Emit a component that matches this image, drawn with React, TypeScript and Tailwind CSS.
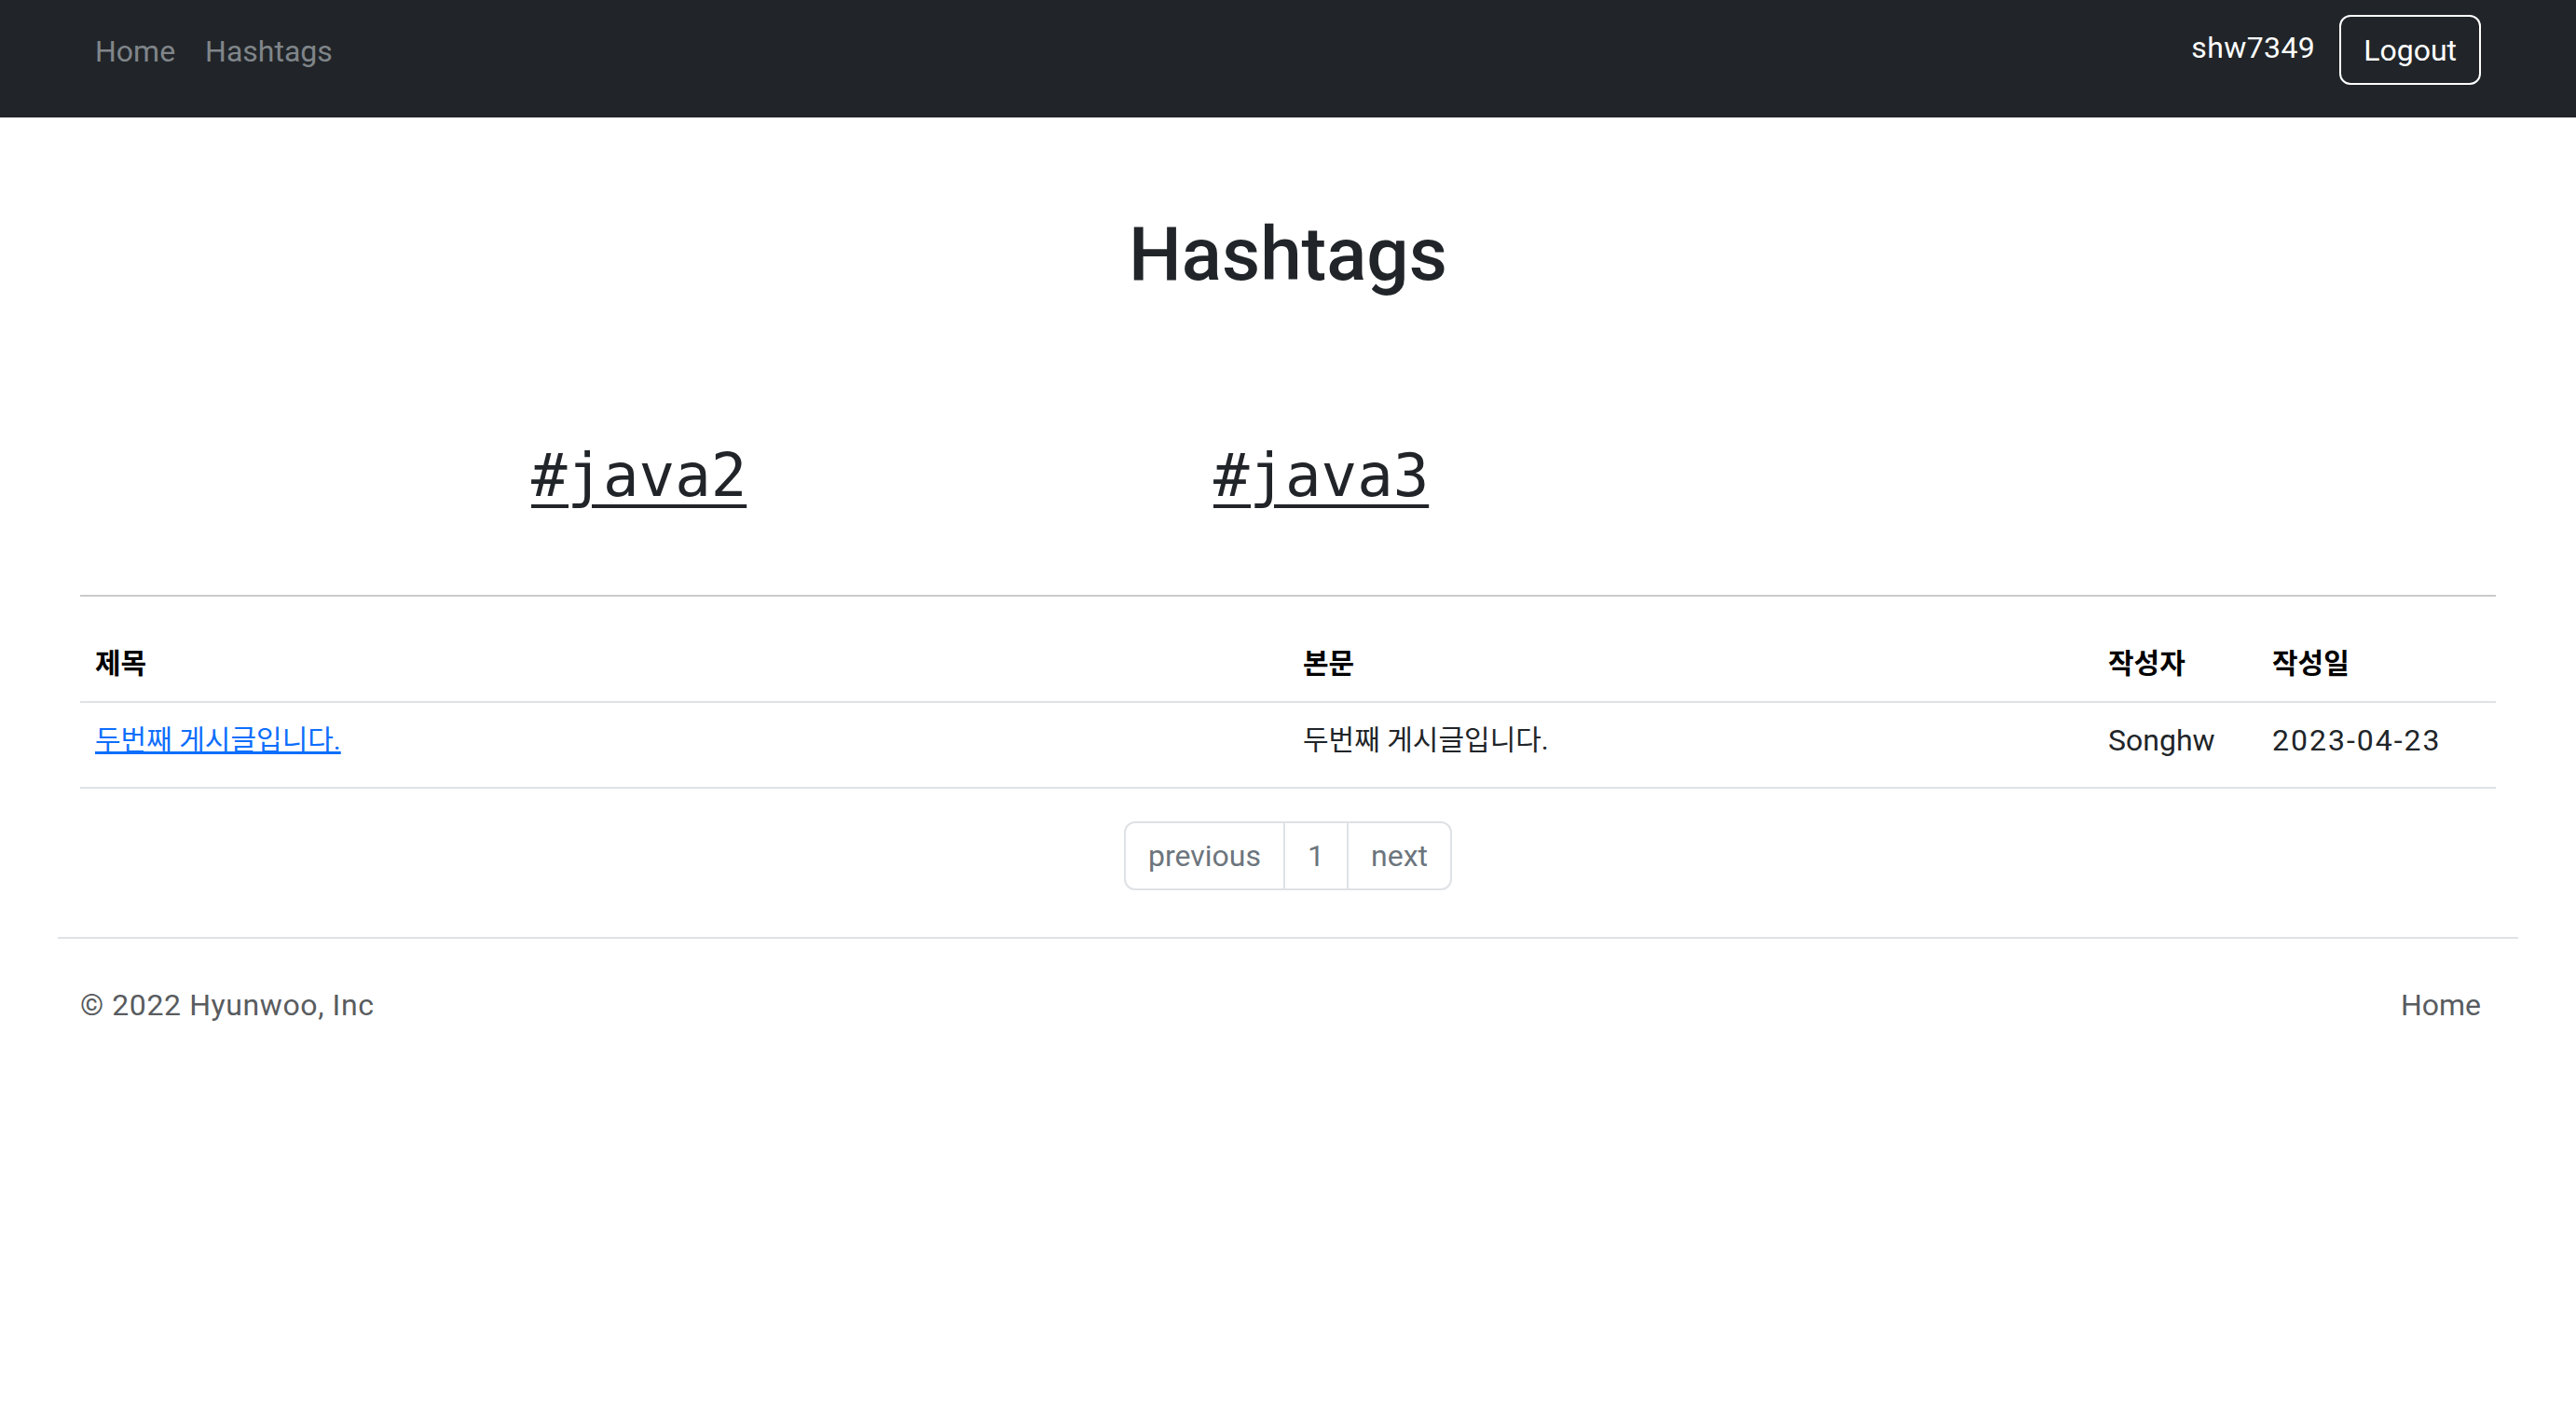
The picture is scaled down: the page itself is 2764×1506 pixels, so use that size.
import { FC } from "react";

const articles = [
  {
    title: "두번째 게시글입니다.",
    content: "두번째 게시글입니다.",
    author: "Songhw",
    createdAt: "2023-04-23",
  },
];

const hashtags = ["#java2", "#java3"];

const Header: FC = () => {
  return (
    <header className="flex h-[126px] items-start justify-between bg-[#212529] pl-[86px] pr-[102px] pt-[16px]">
      <nav className="flex pt-[15px]">
        <a href="#" className="px-[16px] leading-[48px] text-[#80858a]">
          Home
        </a>
        <a href="#" className="px-[16px] leading-[48px] text-[#80858a]">
          Hashtags
        </a>
      </nav>
      <div className="flex h-[75px] items-center gap-[26px]">
        <span className="mb-[6px] tracking-[0.4px] text-white">shw7349</span>
        <button className="h-[75px] rounded-[12px] border-2 border-white px-[24px] leading-[48px] text-white">
          Logout
        </button>
      </div>
    </header>
  );
};

const Pagination: FC = () => {
  return (
    <ul className="mx-auto mt-[35px] flex w-fit text-[#6c757d]">
      <li className="rounded-l-[12px] border-2 border-[#dee2e6] px-[24px] py-[11px] leading-[48px]">
        previous
      </li>
      <li className="-ml-[2px] border-2 border-[#dee2e6] px-[24px] py-[11px] leading-[48px]">
        1
      </li>
      <li className="-ml-[2px] rounded-r-[12px] border-2 border-[#dee2e6] px-[24px] py-[11px] leading-[48px]">
        next
      </li>
    </ul>
  );
};

const App: FC = () => {
  return (
    <div className="min-h-screen bg-white font-['Roboto','Noto_Sans_CJK_KR',sans-serif] text-[32px] leading-[48px] text-[#212529]">
      <Header />

      <main className="px-[86px] pt-[99px]">
        <h1 className="text-center text-[80px] font-medium leading-[96px]">
          Hashtags
        </h1>

        <div className="mt-[151px] flex pl-[484px]">
          {hashtags.map((tag) => (
            <div key={tag} className="w-[732px]">
              <a
                href="#"
                className="font-['DejaVu_Sans_Mono',monospace] text-[64px] leading-[77px] underline decoration-[4px] underline-offset-[9px]"
              >
                {tag}
              </a>
            </div>
          ))}
        </div>

        <hr className="mt-[89px] border-t-2 border-[#c9cacb]" />

        <table className="mt-[32px] w-full table-fixed border-collapse text-left">
          <thead>
            <tr className="border-b-2 border-[#dee2e6] text-[30px] font-bold text-black">
              <th className="w-[1296px] px-[16px] py-[16px] font-bold">제목</th>
              <th className="w-[864px] px-[16px] py-[16px] font-bold">본문</th>
              <th className="w-[176px] px-[16px] py-[16px] font-bold">작성자</th>
              <th className="w-[256px] px-[16px] py-[16px] font-bold">작성일</th>
            </tr>
          </thead>
          <tbody>
            {articles.map((article) => (
              <tr key={article.title} className="border-b-2 border-[#dee2e6]">
                <td className="px-[16px] pb-[26px] pt-[16px] text-[30px]">
                  <a href="#" className="text-[#0d6efd] underline">
                    {article.title}
                  </a>
                </td>
                <td className="px-[16px] pb-[26px] pt-[16px] text-[30px]">
                  {article.content}
                </td>
                <td className="px-[16px] pb-[26px] pt-[16px]">{article.author}</td>
                <td className="px-[16px] pb-[26px] pt-[16px] tracking-[2px]">
                  {article.createdAt}
                </td>
              </tr>
            ))}
          </tbody>
        </table>

        <Pagination />
      </main>

      <footer className="mx-[62px] mt-[50px] flex justify-between border-t-2 border-[#dee2e6] pl-[24px] pr-[40px] pt-[47px] text-[#595c5f]">
        <span className="tracking-[0.6px]">© 2022 Hyunwoo, Inc</span>
        <a href="#">Home</a>
      </footer>
    </div>
  );
};

export default App;
